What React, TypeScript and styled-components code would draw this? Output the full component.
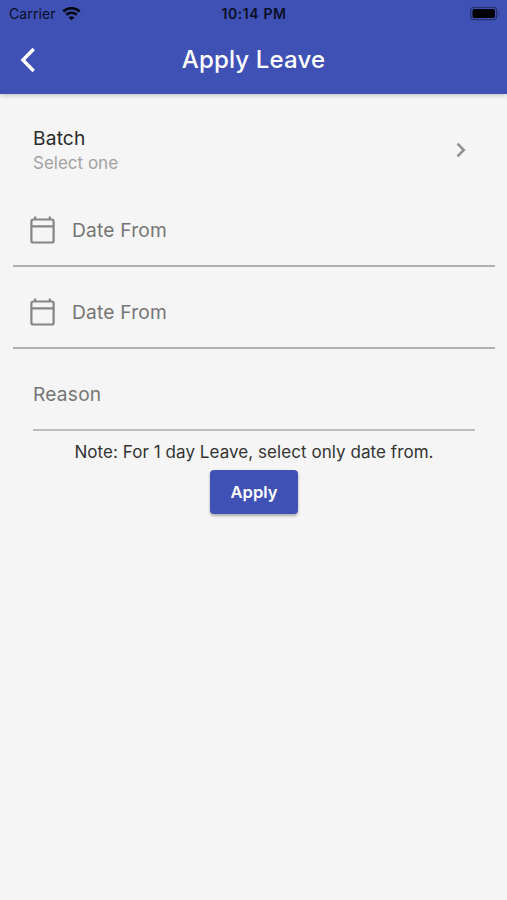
import React from "react";
import styled, { createGlobalStyle } from "styled-components";

const GlobalStyle = createGlobalStyle`
  * { box-sizing: border-box; }
  body { margin: 0; background: #f5f5f5; font-family: Inter, "Liberation Sans", sans-serif; }
`;

const Screen = styled.div`
  width: 507px;
  height: 900px;
  overflow: hidden;
  background: #f5f5f5;
  display: flex;
  flex-direction: column;
`;

const Header = styled.header`
  height: 94px;
  flex: none;
  background: #3f51b5;
  box-shadow: 0 1px 5px rgba(0, 0, 0, 0.24);
`;

const StatusBar = styled.div`
  height: 27px;
  padding: 0 7px 0 9px;
  display: grid;
  grid-template-columns: 1fr auto 1fr;
  align-items: center;
  color: #0b0f26;
  font-size: 14px;
  line-height: 27px;
`;

const Carrier = styled.div`
  display: flex;
  align-items: center;
  gap: 6px;
  letter-spacing: 0.1px;
`;

const Clock = styled.div`
  font-weight: 600;
  letter-spacing: 0.6px;
  margin-right: 1px;
`;

const Battery = styled.div`
  display: flex;
  justify-content: flex-end;
`;

const AppBar = styled.div`
  height: 65px;
  padding: 0 16px;
  display: grid;
  grid-template-columns: 40px 1fr 40px;
  align-items: center;
`;

const BackButton = styled.button`
  padding: 0 0 0 4px;
  border: 0;
  background: none;
  display: flex;
`;

const Title = styled.h1`
  margin: 0;
  color: #fff;
  font-size: 24px;
  font-weight: 500;
  line-height: 30px;
  letter-spacing: 0.15px;
  text-align: center;
`;

const Form = styled.main`
  padding: 28px 12px 0 13px;
  display: flex;
  flex-direction: column;
`;

const BatchRow = styled.div`
  height: 63px;
  padding: 4px 26px 0 20px;
  display: flex;
  align-items: flex-start;
  justify-content: space-between;
`;

const BatchLabel = styled.div`
  color: #2a2a2a;
  font-size: 19.2px;
  line-height: 25px;
  letter-spacing: 0.15px;
`;

const BatchHint = styled.div`
  color: #a2a2a2;
  font-size: 17px;
  line-height: 25px;
`;

const Chevron = styled.div`
  display: flex;
  padding-top: 16px;
`;

const DateField = styled.div`
  height: 82px;
  padding: 10px 0 0 15px;
  border-bottom: 2px solid #b0b0b0;
  display: flex;
  align-items: center;
  gap: 15px;
`;

const FieldText = styled.span`
  color: #757575;
  font-size: 19.2px;
  line-height: 26px;
  letter-spacing: 0.2px;
`;

const ReasonField = styled.div`
  height: 82px;
  margin: 0 20px;
  padding-top: 10px;
  border-bottom: 2px solid #bdbdbd;
  display: flex;
  align-items: center;
`;

const Note = styled.p`
  margin: 9px 0 0;
  color: #333;
  font-size: 17px;
  line-height: 24px;
  letter-spacing: 0.06px;
  text-align: center;
`;

const ApplyButton = styled.button`
  align-self: center;
  width: 88px;
  height: 44px;
  margin-top: 6px;
  padding: 0;
  border: 0;
  border-radius: 4px;
  background: #3f51b5;
  color: #fff;
  font: 600 16.6px/44px Inter, sans-serif;
  box-shadow: 0 2px 3px rgba(0, 0, 0, 0.3);
`;

const WifiIcon = () => (
  <svg width="19" height="14" viewBox="0 0 19 14" fill="none" stroke="#05070f" strokeWidth="2.7">
    <path d="M1.3 4.5C6 .1 13 .1 17.7 4.5" />
    <path d="M4.2 7.8C7.3 5.1 11.7 5.1 14.8 7.8" />
    <path d="M6.6 10.4C8.3 8.9 10.7 8.9 12.4 10.4L9.5 13.3Z" fill="#05070f" stroke="none" />
  </svg>
);

const BatteryIcon = () => (
  <svg width="30" height="14" viewBox="0 0 30 14">
    <rect x="0.7" y="0.3" width="26" height="12.4" rx="3.5" fill="none" stroke="#26316f" strokeWidth="1.2" />
    <rect x="2.5" y="2" width="22.5" height="9" rx="1.8" fill="#000" />
    <path d="M28.2 4.5Q30 6.5 28.2 8.5Z" fill="#26316f" />
  </svg>
);

const CalendarIcon = () => (
  <svg width="29" height="30" viewBox="0 0 29 30" fill="none" stroke="#858585" strokeWidth="2.2">
    <rect x="3.4" y="4.5" width="22.2" height="23" rx="1.8" />
    <path d="M3.4 11.4H25.6M7.2 1.5V5M21.8 1.5V5" />
  </svg>
);

export default function App() {
  return (
    <>
      <GlobalStyle />
      <Screen>
        <Header>
          <StatusBar>
            <Carrier>Carrier <WifiIcon /></Carrier>
            <Clock>10:14 PM</Clock>
            <Battery><BatteryIcon /></Battery>
          </StatusBar>
          <AppBar>
            <BackButton aria-label="Back">
              <svg width="16" height="26" viewBox="0 0 16 26" fill="none" stroke="#fff" strokeWidth="3.4">
                <path d="M13.7 2L2.9 13L13.7 24" />
              </svg>
            </BackButton>
            <Title>Apply Leave</Title>
          </AppBar>
        </Header>
        <Form>
          <BatchRow>
            <div>
              <BatchLabel>Batch</BatchLabel>
              <BatchHint>Select one</BatchHint>
            </div>
            <Chevron>
              <svg width="14" height="16" viewBox="0 0 14 16" fill="none" stroke="#929292" strokeWidth="2.6">
                <path d="M2.5 1.7L8.8 8L2.5 14.3" />
              </svg>
            </Chevron>
          </BatchRow>
          <DateField><CalendarIcon /><FieldText>Date From</FieldText></DateField>
          <DateField><CalendarIcon /><FieldText>Date From</FieldText></DateField>
          <ReasonField><FieldText>Reason</FieldText></ReasonField>
          <Note>Note: For 1 day Leave, select only date from.</Note>
          <ApplyButton>Apply</ApplyButton>
        </Form>
      </Screen>
    </>
  );
}
